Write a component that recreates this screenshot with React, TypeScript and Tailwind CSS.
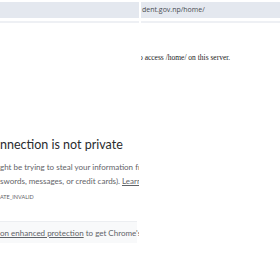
export default function App() {
  return (
    <div className="flex w-[280px] h-[271px] bg-white overflow-hidden">
      {/* Left: Chrome privacy error */}
      <div className="w-[139px] shrink-0 overflow-hidden flex flex-col">
        <div className="mt-[2px] h-[16px] bg-[#e4e8ef]" />
        <div className="mt-[3px] h-[2px] bg-[#eef0f4]" />
        <div className="mt-[113px] whitespace-nowrap" style={{ fontFamily: 'Lato, "Open Sans", sans-serif' }}>
          <h1 className="text-[12.5px] leading-[18px] text-[#2a2b2e]">nnection is not private</h1>
          <p className="mt-[6px] text-[8px] leading-[14px] text-[#5f6368]">ght be trying to steal your information from</p>
          <p className="text-[8px] leading-[14px] text-[#5f6368]">
            swords, messages, or credit cards). <span className="underline">Learn more</span>
          </p>
          <p className="mt-[3px] text-[5.5px] leading-[12px] text-[#5f6368]">ATE_INVALID</p>
          <div className="mt-[18px] mr-[2px] h-[22px] bg-[#f8f9fa] border-t border-[#eceef1] flex items-center">
            <p className="text-[8px] text-[#5f6368]">
              <span className="underline">on enhanced protection</span> to get Chrome's highest
            </p>
          </div>
        </div>
      </div>
      {/* Right: server forbidden page */}
      <div className="flex-1 ml-[2px] overflow-hidden flex flex-col">
        <div className="mt-[2px] h-[16px] bg-[#e4e8ef] flex items-center px-[1px] whitespace-nowrap">
          <span className="text-[7px] text-[#4a4d52]" style={{ fontFamily: '"Open Sans", sans-serif' }}>dent.gov.np/home/</span>
        </div>
        <div className="mt-[3px] h-[2px] bg-[#eef0f4]" />
        <p
          className="mt-[30px] -ml-[2px] text-[7.5px] leading-[10px] text-[#222] whitespace-nowrap"
          style={{ fontFamily: '"Liberation Serif", serif' }}
        >
          o access /home/ on this server.
        </p>
      </div>
    </div>
  );
}
